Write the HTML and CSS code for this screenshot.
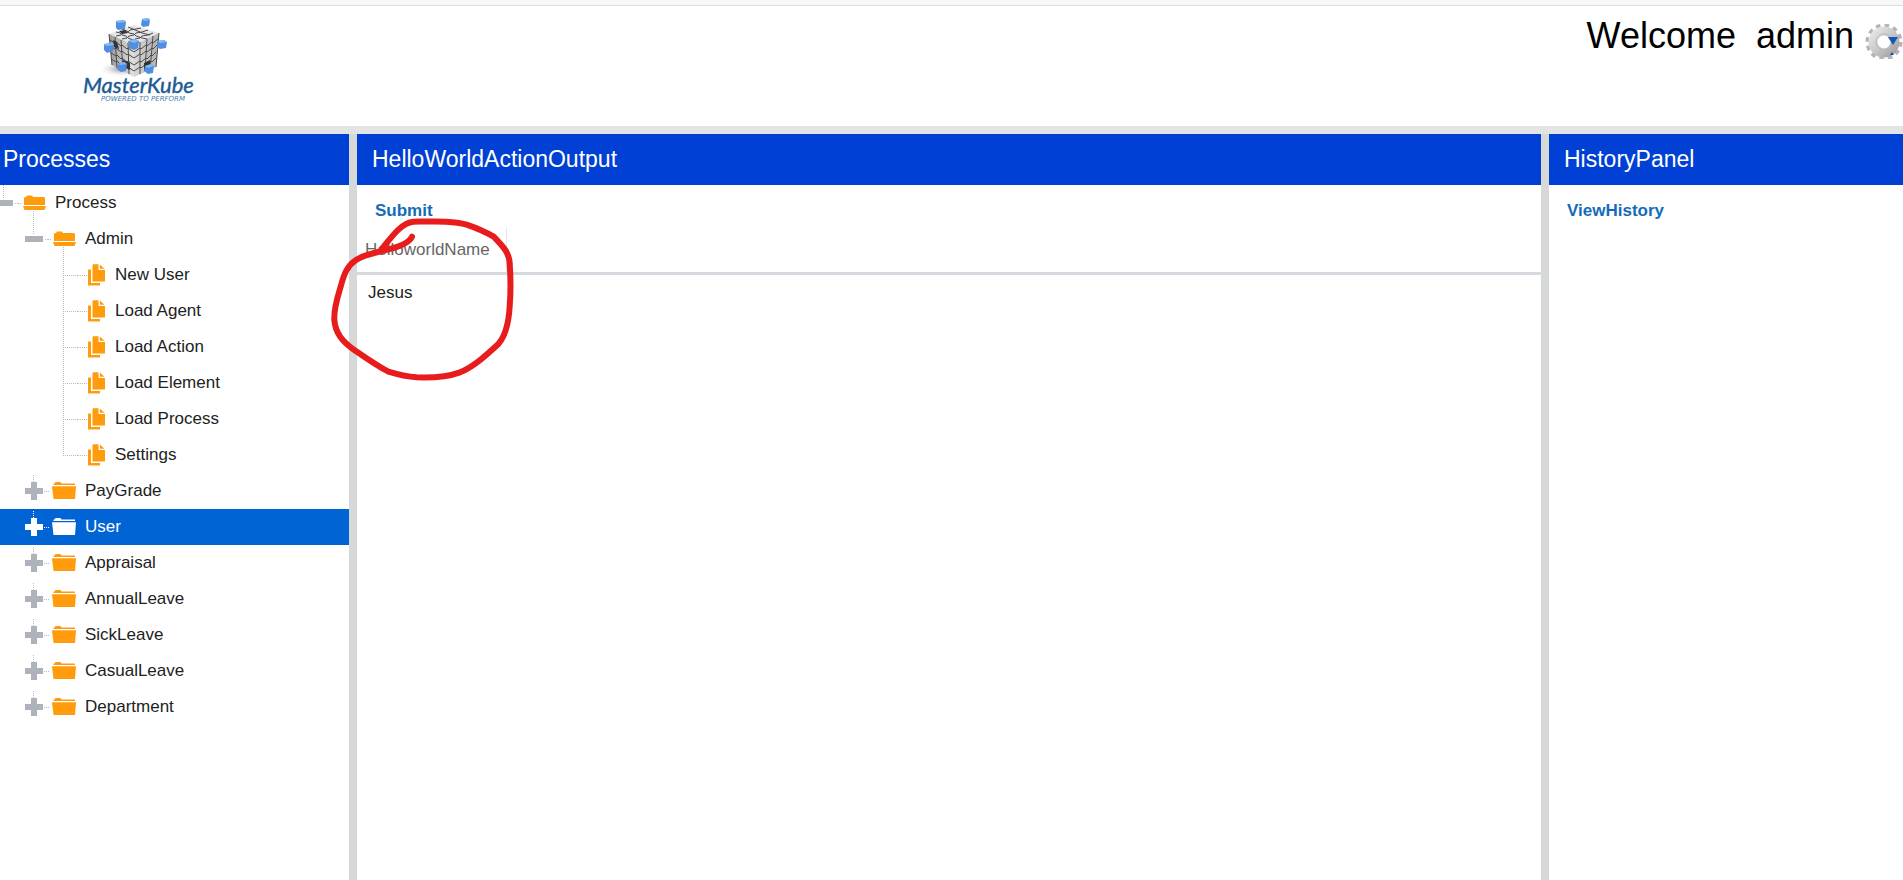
FILE: index.html
```
<!DOCTYPE html>
<html lang="en">
<head>
    <meta charset="UTF-8">
    <meta name="viewport" content="width=device-width, initial-scale=1.0">
    <title>MasterKube</title>
    <link rel="stylesheet" href="styles.css">
</head>
<body>
    <!-- tree icons -->
    <svg class="sprite" aria-hidden="true">
        <symbol id="minus" viewBox="0 0 30 36">
            <path class="dots" d="M15.500 0V14M27 18.500H30"/>
            <rect class="knob" x="7" y="15" width="18" height="6"/>
        </symbol>
        <symbol id="plus" viewBox="0 0 30 36">
            <path class="dots" d="M15.500 2V9M26 18.500H30"/>
            <path class="knob" d="M13 9h6v6h6v6h-6v6h-6v-6H7v-6h6z"/>
        </symbol>
        <symbol id="branch" viewBox="0 0 30 36">
            <path class="dots" d="M15.500 0V36M17 18.500H30"/>
        </symbol>
        <symbol id="branch-end" viewBox="0 0 30 36">
            <path class="dots" d="M15.500 0V19M17 18.500H30"/>
        </symbol>
        <symbol id="open" viewBox="0 0 30 36">
            <path class="dots" d="M0 18.500H4M15.500 26V36"/>
            <path class="shape" d="M6 12.500L8 12l1-1.500h5l1 1.500h11l1 1V20H6z"/>
            <path class="shape" d="M5 21h23l-1.500 4H6.500z"/>
        </symbol>
        <symbol id="closed" viewBox="0 0 30 36">
            <path class="dots" d="M0 18.500H2"/>
            <path class="shape" d="M5.500 10.500H6.500L7.500 9h5l1 1.500H27V12H5.500z"/>
            <path class="shape" d="M4 13.300h24L27 26H5.500z"/>
        </symbol>
        <symbol id="file" viewBox="0 0 30 36">
            <path class="dots" d="M0 18.500H9"/>
            <path class="shape" d="M10 12.500h3V26h9v2.500H10z"/>
            <path class="shape" d="M14.500 8l.5-.8h5.500V13H27v11.500H14.500z"/>
            <path class="shape" d="M21.800 7.500l4.700 4.300h-4.700z"/>
        </symbol>
    </svg>

    <header class="topbar">
        <svg class="logo" width="160" height="100" viewBox="60 6 160 100" role="img" aria-label="MasterKube">
            <defs>
                <linearGradient id="side" x1="0" x2="1">
                    <stop offset="0" stop-color="#999"/>
                    <stop offset="1" stop-color="#e2e2e2"/>
                </linearGradient>
                <linearGradient id="front" x1="0" x2="1">
                    <stop offset="0" stop-color="#d8d8d8"/>
                    <stop offset="1" stop-color="#b0b0b0"/>
                </linearGradient>
                <radialGradient id="shade">
                    <stop offset="0" stop-color="#888"/>
                    <stop offset="1" stop-color="#fff" stop-opacity="0"/>
                </radialGradient>
            </defs>
            <ellipse cx="122" cy="69" rx="24" ry="8" fill="url(#shade)"/>
            <path d="M109 34l25-9 25 8-25 12z" fill="#e6e6e6"/>
            <path d="M109 34l25 11v32l-22-12z" fill="url(#side)"/>
            <path d="M134 45l25-12-3 34-22 10z" fill="url(#front)"/>
            <g class="grid">
                <path d="M116 32l4 1 2 2 4 1 2 2 5 2 6 2M122 29l5 2 2 2 5 1 2 2 6 2 5 1M128 27l5 2 2 1 5 2 2 1 8 2M116 36l5-1 2-2 5-1 2-2 6-1 5-1M122 39l5-1 2-2 5-1 2-2 6-1 6-2M128 42l5-1 2-2 5-1 2-2 6-1 5-2"/>
                <path d="M115 37l2 31M121 40l2 31M128 43l1 31M140 42v32M147 39l-2 32M153 36l-3 34M109 34l3 31M159 33l-3 34"/>
                <path d="M110 40l5 3 1-1 5 4 1-1 5 4 1-1 6 4 6-4 1 1 5-4 1 1 5-4 1 1 5-4"/>
                <path d="M110 46l5 3 1-1 5 4 1-1 5 4 1-1 6 4 6-4 1 1 5-4 1 1 5-4 1 1 4-4"/>
                <path d="M111 53l5 3 1-1 4 4 1-1 5 4 1-1 6 4 6-4 1 1 5-4 1 1 4-4 1 1 4-4"/>
                <path d="M111 59l5 3 1-1 4 4 1-1 5 4 1-1 6 4 6-4 1 1 5-4 1 1 4-4 1 1 4-4"/>
            </g>
            <path d="M119 31l6-1 3 3-6 1zM113 40l4 2 2 7-5-2zM123 60l7 3v7l-7-3zM144 63l6-3v7l-6 4z" fill="#333"/>
            <g class="cubes">
                <path d="M116 21l8-1 2 2-1 7-7 1-2-2z"/>
                <path d="M142 19l6-1 2 2-1 6-6 1-2-2z"/>
                <path d="M104 44l8-1 2 2-1 6-6 2-3-3z"/>
                <path d="M129 41l5-2 5 2-1 7-4 2-5-2z"/>
                <path d="M158 41l6-1 3 2-1 6-6 1-3-2z"/>
                <path d="M118 64l6-2 3 2-1 7-5 1-4-3z"/>
                <path d="M145 66l6-2 3 2-1 7-5 1-4-3z"/>
            </g>
            <path class="tops" d="M116 21l8-1 2 2-8 1zM142 19l6-1 2 2-6 1zM104 44l8-1 2 2-8 1zM129 41l5-2 5 2-5 2zM158 41l6-1 3 2-7 1zM118 64l6-2 3 2-7 1zM145 66l6-2 3 2-6 2z"/>
            <text class="brand" x="83" y="93">MasterKube</text>
            <text class="slogan" x="101" y="101">POWERED TO PERFORM</text>
        </svg>
        <div class="account">
            <span>Welcome&nbsp; admin</span>
            <button class="gear" type="button" aria-label="Settings menu">
                <svg width="38" height="35" viewBox="0 0 38 35">
                    <defs>
                        <linearGradient id="metal" x1="0" y1="0" x2="1" y2="1">
                            <stop offset="0" stop-color="#e6e6e6"/>
                            <stop offset=".5" stop-color="#c8c8c8"/>
                            <stop offset="1" stop-color="#a4a4a4"/>
                        </linearGradient>
                    </defs>
                    <circle cx="19" cy="18" r="16" fill="none" stroke="#b4b4b4" stroke-width="5" stroke-dasharray="4.400 3.979"/>
                    <circle cx="19" cy="18" r="11" fill="none" stroke="url(#metal)" stroke-width="9"/>
                    <circle cx="19" cy="18" r="8" fill="none" stroke="#bbb" stroke-width="1"/>
                    <path d="M23 13h10l-5 8zM25 31l2-3 2 3z" fill="#1157b5"/>
                </svg>
            </button>
        </div>
    </header>

    <div class="layout">
        <nav class="panel">
            <h2 class="narrow">Processes</h2>
            <ul class="tree">
                <li>
                    <a href="#" class="row"><svg class="half"><use href="#minus" x="-12" width="30" height="36"/></svg><svg><use href="#open"/></svg>Process</a>
                    <ul class="level1">
                        <li>
                            <a href="#" class="row"><svg><use href="#minus"/></svg><svg><use href="#open"/></svg>Admin</a>
                            <ul class="level2">
                                <li><a href="#" class="row"><svg><use href="#branch"/></svg><svg><use href="#file"/></svg>New User</a></li>
                                <li><a href="#" class="row"><svg><use href="#branch"/></svg><svg><use href="#file"/></svg>Load Agent</a></li>
                                <li><a href="#" class="row"><svg><use href="#branch"/></svg><svg><use href="#file"/></svg>Load Action</a></li>
                                <li><a href="#" class="row"><svg><use href="#branch"/></svg><svg><use href="#file"/></svg>Load Element</a></li>
                                <li><a href="#" class="row"><svg><use href="#branch"/></svg><svg><use href="#file"/></svg>Load Process</a></li>
                                <li><a href="#" class="row"><svg><use href="#branch-end"/></svg><svg><use href="#file"/></svg>Settings</a></li>
                            </ul>
                        </li>
                        <li><a href="#" class="row"><svg><use href="#plus"/></svg><svg><use href="#closed"/></svg>PayGrade</a></li>
                        <li><a href="#" class="row selected"><svg><use href="#plus"/></svg><svg><use href="#closed"/></svg>User</a></li>
                        <li><a href="#" class="row"><svg><use href="#plus"/></svg><svg><use href="#closed"/></svg>Appraisal</a></li>
                        <li><a href="#" class="row"><svg><use href="#plus"/></svg><svg><use href="#closed"/></svg>AnnualLeave</a></li>
                        <li><a href="#" class="row"><svg><use href="#plus"/></svg><svg><use href="#closed"/></svg>SickLeave</a></li>
                        <li><a href="#" class="row"><svg><use href="#plus"/></svg><svg><use href="#closed"/></svg>CasualLeave</a></li>
                        <li><a href="#" class="row"><svg><use href="#plus"/></svg><svg><use href="#closed"/></svg>Department</a></li>
                    </ul>
                </li>
            </ul>
        </nav>

        <main class="panel output">
            <h2>HelloWorldActionOutput</h2>
            <div class="toolbar"><button type="button">Submit</button></div>
            <table>
                <thead>
                    <tr><th class="name">HelloworldName</th><th></th></tr>
                </thead>
                <tbody>
                    <tr><td>Jesus</td><td></td></tr>
                </tbody>
            </table>
            <svg class="scribble" width="320" height="270" viewBox="0 0 960 810" aria-hidden="true">
                <path d="M276 350C266 372 225 383 205 388C170 398 135 402 108 420C82 437 72 462 62 500C52 534 41 565 43 600C46 640 68 664 100 688C135 712 172 738 205 755C235 764 262 770 290 772C345 774 390 768 420 757C462 740 500 704 535 672C556 648 566 610 569 560C573 510 572 470 569 430C568 400 552 382 521 350C500 338 466 323 440 314C400 302 350 304 280 305C246 308 218 346 187 385"/>
            </svg>
        </main>

        <aside class="panel">
            <h2>HistoryPanel</h2>
            <div class="toolbar"><button type="button">ViewHistory</button></div>
        </aside>
    </div>
</body>
</html>
```
FILE: styles.css
```
* {
    box-sizing: border-box;
}
body {
    margin: 0;
    min-height: 100vh;
    display: flex;
    flex-direction: column;
    font-family: "Liberation Sans", Arial, sans-serif;
    font-size: 17px;
    color: #222;
    background: #fff;
    border-top: 5px solid #f8f8f8;
}
ul {
    list-style: none;
    margin: 0;
    padding: 0;
}
.sprite {
    position: absolute;
    width: 0;
    height: 0;
}

/* header */
.topbar {
    display: flex;
    justify-content: space-between;
    align-items: flex-start;
    height: 129px;
    padding-left: 60px;
    border-top: 1px solid #ddd;
    border-bottom: 8px solid #e2e5e4;
}
.grid {
    fill: none;
    stroke: #4a4a4a;
    stroke-width: 1;
}
.cubes {
    fill: #4f8fe0;
}
.tops {
    fill: #86b8f4;
}
.brand {
    font: italic 22px Lato, sans-serif;
    fill: #1d5a94;
    stroke: #1d5a94;
    stroke-width: .4px;
}
.slogan {
    font: italic 7px "DejaVu Sans", sans-serif;
    fill: #4b80ae;
}
.account {
    display: flex;
    align-items: flex-start;
    gap: 11px;
    padding-top: 9px;
    font-size: 36px;
    line-height: 42px;
    color: #000;
}
.gear {
    margin-top: 9px;
    padding: 0;
    border: none;
    background: none;
    cursor: pointer;
}
.gear svg {
    display: block;
}

/* panels */
.layout {
    flex: 1;
    display: grid;
    grid-template-columns: 349px 1fr 354px;
    gap: 8px;
    background: #d6d9d8;
}
.panel {
    background: #fff;
}
.panel h2 {
    margin: 0;
    padding: 0 15px;
    font-size: 23px;
    font-weight: normal;
    line-height: 51px;
    color: #fff;
    background: #0040d4;
}
.panel h2.narrow {
    padding: 0 3px;
}
.toolbar {
    height: 42px;
    padding: 16px 18px 0;
}
.toolbar button {
    display: block;
    padding: 0;
    border: none;
    background: none;
    font: bold 17px/20px "Liberation Sans", Arial, sans-serif;
    color: #146cb8;
    cursor: pointer;
}

/* tree */
.row {
    display: flex;
    align-items: center;
    height: 36px;
    color: #222;
    text-decoration: none;
}
.row svg {
    width: 30px;
    height: 36px;
}
.row svg.half {
    width: 18px;
}
.row svg:nth-of-type(2) {
    margin-right: 7px;
}
.level1 .row {
    padding-left: 18px;
}
.level2 .row {
    padding-left: 48px;
}
.dots {
    fill: none;
    stroke: #bbb;
    stroke-dasharray: 1 1;
}
.knob {
    fill: #adb2bb;
}
.shape {
    fill: #ff9c0d;
}
.level1 .row.selected {
    color: #fff;
    background: #0064d4;
}
.selected svg {
    filter: brightness(0) invert(1);
}

/* output table */
.output {
    position: relative;
}
table {
    width: 100%;
    border-spacing: 0;
}
th {
    height: 48px;
    padding: 0 8px;
    border-bottom: 3px solid #d6dadf;
    font-weight: normal;
    text-align: left;
    color: #666;
}
th.name {
    width: 150px;
    background: linear-gradient(#e4e6e8, #e4e6e8) right / 1px 100% no-repeat;
}
td {
    height: 36px;
    padding: 0 11px;
}
.scribble {
    position: absolute;
    top: -14px;
    left: -37px;
    pointer-events: none;
}
.scribble path {
    fill: none;
    stroke: #e81c1c;
    stroke-width: 18;
    stroke-linecap: round;
    stroke-linejoin: round;
}
```
